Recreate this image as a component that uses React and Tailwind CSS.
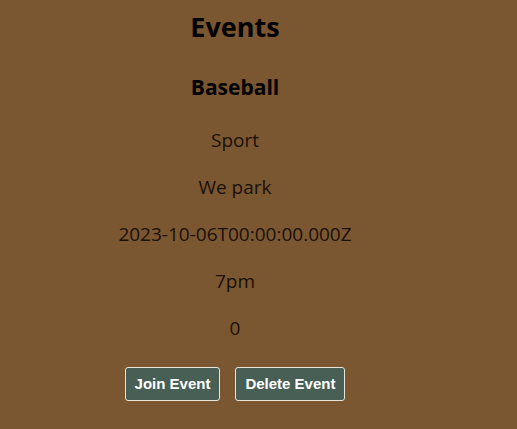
export default function App() {
  const items = ["Sport", "We park", "2023-10-06T00:00:00.000Z", "7pm", "0"];
  return (
    <div className="min-h-[429px] w-full bg-[#7b5731]">
      <div className="w-[470px] flex flex-col items-center text-center pt-[10px] text-black font-['Open_Sans',sans-serif]">
        <h1 className="text-[27px] leading-[34px] font-bold">Events</h1>
        <h3 className="mt-[29px] text-[21px] leading-[28px] font-bold">Baseball</h3>
        <div className="mt-[27px] flex flex-col items-center gap-[23px] text-[19px] leading-[24px] text-[#1a1008]">
          {items.map((t) => (
            <p key={t}>{t}</p>
          ))}
        </div>
        <div className="mt-[27px] flex gap-[15px] font-['Liberation_Sans',Arial,sans-serif]">
          <button className="h-[34px] px-[9px] bg-[#475f55] text-white font-bold text-[15px] border border-[#e8e4d8] rounded-[3px]">
            Join Event
          </button>
          <button className="h-[34px] px-[9px] bg-[#475f55] text-white font-bold text-[15px] border border-[#e8e4d8] rounded-[3px]">
            Delete Event
          </button>
        </div>
      </div>
    </div>
  );
}
